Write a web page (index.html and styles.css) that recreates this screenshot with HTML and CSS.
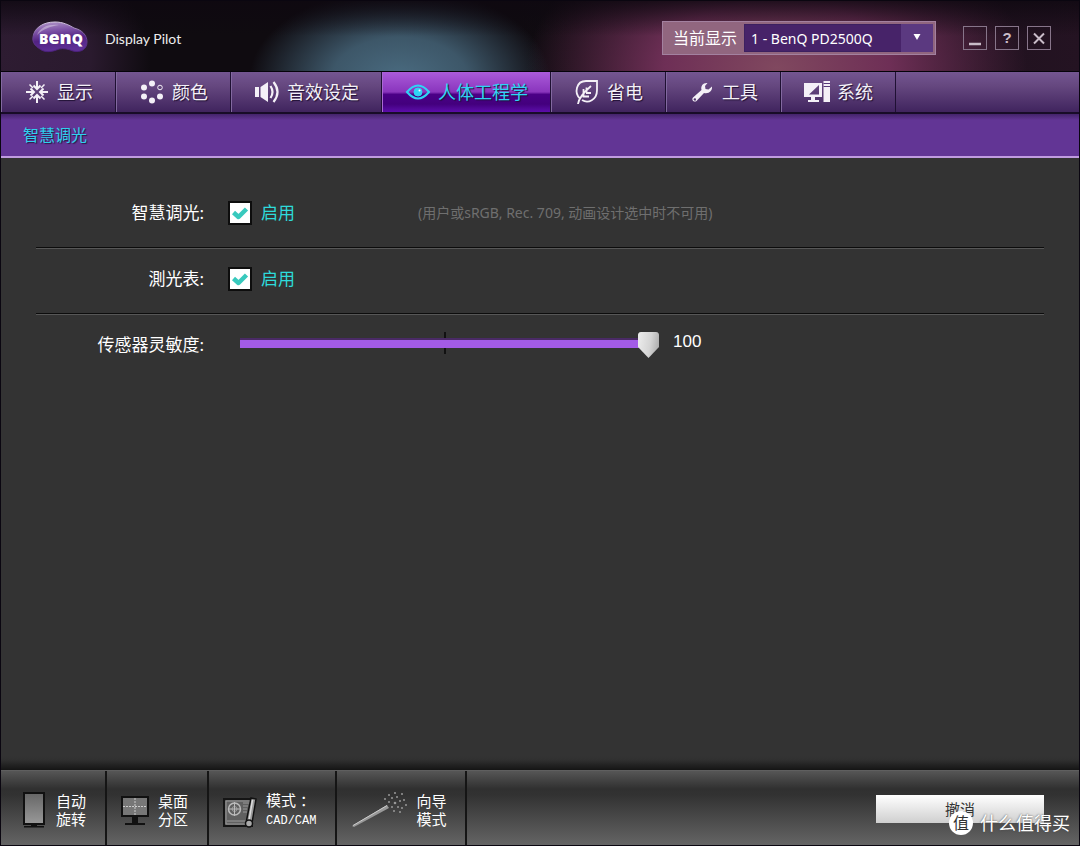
FILE: index.html
```html
<!DOCTYPE html>
<html lang="zh-CN">
<head>
<meta charset="utf-8">
<meta name="viewport" content="width=device-width, initial-scale=1">
<title>Display Pilot</title>
<link rel="stylesheet" href="styles.css">
</head>
<body>
<div class="window">
  <header class="titlebar">
    <svg class="logo" width="58" height="34" viewBox="0 0 58 34" role="img" aria-label="BenQ">
      <defs>
        <linearGradient id="logo-fill" x1="0" y1="0" x2="0.2" y2="1">
          <stop offset="0" stop-color="#b79dcc"/>
          <stop offset="0.35" stop-color="#7d52a6"/>
          <stop offset="0.65" stop-color="#522282"/>
          <stop offset="1" stop-color="#5e2f96"/>
        </linearGradient>
        <linearGradient id="logo-rim" x1="0" y1="0" x2="0" y2="1">
          <stop offset="0" stop-color="#d8cbe4"/>
          <stop offset="0.5" stop-color="#6a4592"/>
          <stop offset="1" stop-color="#4b1f7c"/>
        </linearGradient>
      </defs>
      <path d="M2 16C3 7 12 1 24 1C32 1 38 4 43 7C51 9 56 14 56 21C56 28 50 32 42 30C37 28 33 27 28 28C21 31 14 32 9 28C4 25 1 21 2 16Z" fill="url(#logo-fill)" stroke="url(#logo-rim)"/>
      <path d="M6 14C9 6 18 3 28 4C20 5 12 8 6 14Z" fill="#fff" opacity="0.35"/>
      <text class="logo-text" x="8" y="23"><tspan class="logo-cap">B</tspan>en<tspan class="logo-cap">Q</tspan></text>
    </svg>
    <h1 class="app-name">Display Pilot</h1>
    <div class="picker">
      <label class="picker-label" for="display">当前显示</label>
      <div class="picker-field">
        <select class="picker-select" id="display"><option>1 - BenQ PD2500Q</option></select>
        <svg class="picker-arrow" width="32" height="28" viewBox="0 0 32 28" aria-hidden="true"><path d="M12.500 10H19.500L16 16Z" fill="#fff"/></svg>
      </div>
    </div>
    <div class="window-buttons">
      <button class="window-button" aria-label="最小化"><svg width="22" height="22" viewBox="0 0 22 22"><path d="M5 17H17" stroke="#c9bcc8" stroke-width="2.5"/></svg></button>
      <button class="window-button" aria-label="帮助">?</button>
      <button class="window-button" aria-label="关闭"><svg width="22" height="22" viewBox="0 0 22 22"><path d="M6 6.500L16 16.500M16 6.500L6 16.500" stroke="#c9bcc8" stroke-width="2"/></svg></button>
    </div>
  </header>

  <nav class="tabs">
    <button class="tab">
      <svg width="26" height="26" viewBox="0 0 26 26" fill="none" stroke="currentColor" stroke-width="2"><path d="M13 2V10M13 16V24M2 13H10M16 13H24M9.500 6.500L13 10L16.500 6.500M9.500 19.500L13 16L16.500 19.500M6.500 9.500L10 13L6.500 16.500M19.500 9.500L16 13L19.500 16.500"/><path d="M5.500 5.500L9 9M20.500 5.500L17 9M5.500 20.500L9 17M20.500 20.500L17 17" stroke-width="1.500"/></svg>
      <span>显示</span>
    </button>
    <button class="tab">
      <svg width="26" height="26" viewBox="0 0 26 26" fill="currentColor"><circle cx="13" cy="4.500" r="3"/><circle cx="5" cy="8.500" r="3"/><circle cx="5" cy="17.500" r="3"/><circle cx="13" cy="21.500" r="3"/><circle cx="21" cy="17.500" r="3"/><circle cx="21" cy="8.500" r="2.300" fill="none" stroke="currentColor"/></svg>
      <span>颜色</span>
    </button>
    <button class="tab">
      <svg width="26" height="26" viewBox="0 0 26 26"><path d="M1 8H5V18H1ZM6.500 8L14 3V23L6.500 18Z" fill="currentColor"/><path d="M16.500 7Q20.500 13 16.500 19M19.500 3Q27.500 13 19.500 23" fill="none" stroke="currentColor" stroke-width="2.200"/></svg>
      <span>音效设定</span>
    </button>
    <button class="tab tab-active" aria-current="page">
      <svg width="26" height="26" viewBox="0 0 26 26" fill="none" stroke="currentColor"><path d="M2 13Q13 0 24 13Q13 26 2 13Z" stroke-width="2"/><circle cx="13" cy="13" r="4" fill="currentColor"/><circle cx="14.500" cy="11.500" r="1" fill="#fff" stroke="none"/></svg>
      <span>人体工程学</span>
    </button>
    <button class="tab">
      <svg width="26" height="26" viewBox="0 0 26 26" fill="none" stroke="currentColor" stroke-width="1.800"><path d="M4 25C4.500 20 9 14 17 7M9.500 16.500V10M12.500 13.500V8.500M8.500 17.500H15M12 14H17"/><path d="M6 19.500C0 14 2 2 12 2H23V11C23 21 14 25 8 21"/></svg>
      <span>省电</span>
    </button>
    <button class="tab">
      <svg width="26" height="26" viewBox="0 0 26 26" fill="currentColor"><path fill-rule="evenodd" d="M18.500 4C14 3.500 11.500 7 12.500 11L4 18.500C2 20.500 5 24 7.500 22L15 14C20 15 23.500 12 23 7.500L19.500 10.500L16.500 10L16 7ZM5.500 19.200A1.200 1.200 0 1 1 5.400 21.500A1.200 1.200 0 0 1 5.500 19.200Z"/></svg>
      <span>工具</span>
    </button>
    <button class="tab">
      <svg width="26" height="26" viewBox="0 0 26 26"><path d="M0 4H18V18H11V21H15V23H4V21H7V18H0ZM15 6L5 15.500H15Z" fill="currentColor" fill-rule="evenodd"/><path d="M19.500 2H26V23H19.500Z" fill="currentColor"/><path d="M19.500 4.500H26M19.500 7.500H26" stroke="#57387a"/></svg>
      <span>系统</span>
    </button>
  </nav>

  <div class="subtabs"><a class="subtab" href="#dimming">智慧调光</a></div>

  <main class="panel" id="dimming">
    <div class="row">
      <span class="row-label">智慧调光:</span>
      <label class="toggle"><input class="check" type="checkbox" checked><span>启用</span></label>
      <p class="hint">(用户或sRGB, Rec. 709, 动画设计选中时不可用)</p>
    </div>
    <div class="row">
      <span class="row-label">測光表:</span>
      <label class="toggle"><input class="check" type="checkbox" checked><span>启用</span></label>
    </div>
    <div class="row">
      <label class="row-label" for="sensitivity">传感器灵敏度:</label>
      <div class="slider">
        <input class="range" id="sensitivity" type="range" min="0" max="100" value="100">
      </div>
      <output class="value" for="sensitivity">100</output>
    </div>
  </main>

  <footer class="toolbar">
    <button class="tool tool-rotate">
      <svg width="22" height="38" viewBox="0 0 22 38"><defs><linearGradient id="screen" x1="0" y1="0" x2="0" y2="1"><stop offset="0" stop-color="#666"/><stop offset="1" stop-color="#999"/></linearGradient></defs><path d="M1 2H21V33H1Z" fill="url(#screen)" stroke="#111" stroke-width="2"/><path d="M8 33H14V35H8ZM1 35H21V36.500H1Z" fill="#111"/></svg>
      <span>自动<br>旋转</span>
    </button>
    <button class="tool">
      <svg width="28" height="38" viewBox="0 0 28 38"><path d="M1 6H27V25H1Z" fill="#777" stroke="#111" stroke-width="2"/><path d="M14 7V24M2 15.500H26" stroke="#ccc" stroke-dasharray="2 1"/><path d="M11 26H17V32H24V34H4V32H11Z" fill="#111"/></svg>
      <span>桌面<br>分区</span>
    </button>
    <button class="tool">
      <svg width="34" height="38" viewBox="0 0 34 38" fill="none"><path d="M1 8H29V35H1Z" fill="#606060" stroke="#151515" stroke-width="2"/><path d="M3 10H27V33H3ZM4 30H23M20 12H26M20 15H25M20 18H24M20 21H24" stroke="#999"/><circle cx="11.500" cy="18" r="6" stroke="#bbb" stroke-width="1.500"/><circle cx="11.500" cy="18" r="2.500" stroke="#999"/><path d="M11.500 11V25M5 18H18" stroke="#bbb"/><path d="M28 7L33 8L29 32H23Z" fill="#999" stroke="#111" stroke-width="1.500"/><path d="M29.500 9L26 30" stroke="#ddd" stroke-width="1.500"/><circle cx="26" cy="32.500" r="3.500" fill="#aaa" stroke="#111" stroke-width="1.500"/></svg>
      <span>模式 ：<br><span class="mode-name">CAD/CAM</span></span>
    </button>
    <button class="tool">
      <svg width="56" height="38" viewBox="0 0 56 38"><path d="M1 35L36 14L38 17L3 36Z" fill="#999"/><path d="M2 34.500L36 14.500" stroke="#ccc"/><g fill="#999"><circle cx="38" cy="4" r="1"/><circle cx="44" cy="2" r="1"/><circle cx="51" cy="3" r="1"/><circle cx="34" cy="8" r="1"/><circle cx="41" cy="7" r="1"/><circle cx="46" cy="6" r="1"/><circle cx="53" cy="9" r="1"/><circle cx="38" cy="11" r="1"/><circle cx="44" cy="12" r="1.300"/><circle cx="49" cy="10" r="1"/><circle cx="55" cy="14" r="1"/><circle cx="41" cy="16" r="1"/><circle cx="47" cy="16" r="1"/><circle cx="51" cy="17" r="1"/><circle cx="43" cy="20" r="1"/><circle cx="49" cy="21" r="1"/></g></svg>
      <span>向导<br>模式</span>
    </button>
    <button class="undo">撤消</button>
    <div class="watermark"><span class="watermark-badge">值</span><span>什么值得买</span></div>
  </footer>
</div>
</body>
</html>
```

FILE: styles.css
```css
* { box-sizing: border-box; }

body {
  margin: 0;
  background: #000;
  color: #fff;
  font-family: "Noto Sans", "Noto Sans CJK SC", sans-serif;
}

button, select, input { font: inherit; color: inherit; }

.window {
  display: flex;
  flex-direction: column;
  min-height: 100vh;
  border: 1px solid #0a0610;
  background: #333;
}

.titlebar {
  display: flex;
  align-items: center;
  height: 71px;
  padding: 0 28px 0 30px;
  border-bottom: 1px solid #05030a;
  background:
    linear-gradient(rgba(14, 8, 16, 0.8) 0%, rgba(14, 8, 16, 0) 50%),
    radial-gradient(ellipse 150px 90px at 37% 110%, #4a6b80 0%, rgba(66, 95, 114, 0.9) 45%, rgba(40, 50, 70, 0) 100%),
    radial-gradient(ellipse 250px 150px at 72% 95%, #80485f 0%, #6e2f56 45%, rgba(90, 25, 70, 0) 100%),
    radial-gradient(ellipse 150px 110px at 0% 80%, #2e1c32 0%, #2a1a2e 60%, rgba(40, 24, 44, 0) 100%),
    linear-gradient(90deg, #0f0b10 0%, #0f0b10 48%, #241322 100%);
}

.logo { flex: none; margin-top: 3px; }

.logo-text {
  fill: #fff;
  font-family: "Open Sans", sans-serif;
  font-size: 18px;
  font-weight: 800;
}

.logo-cap { font-size: 14px; }

.app-name {
  margin: 6px auto 0 16px;
  font: 14px/18px Lato, sans-serif;
  color: #eee;
}

.picker {
  display: flex;
  align-items: stretch;
  height: 34px;
  margin: 4px 27px 0 0;
  padding: 2px;
  border: 1px solid #a381a0;
  background: #91667f;
}

.picker-label {
  padding: 0 7px 0 8px;
  font-size: 16px;
  line-height: 28px;
}

.picker-field { position: relative; display: flex; }

.picker-select {
  width: 189px;
  padding: 0 32px 0 6px;
  border: 1px solid #3c2060;
  border-radius: 0;
  background: #472369;
  font-size: 14px;
  appearance: none;
}

.picker-arrow {
  position: absolute;
  top: 0;
  right: 0;
  background: #5b3980;
  pointer-events: none;
}

.window-buttons { display: flex; gap: 8px; margin-top: 3px; }

.window-button {
  display: flex;
  align-items: center;
  justify-content: center;
  width: 24px;
  height: 24px;
  padding: 0;
  border: 1px solid #87758a;
  background: transparent;
  color: #c9bcc8;
  font: bold 15px/20px "Liberation Sans", sans-serif;
}

.tabs {
  display: flex;
  height: 42px;
  border-bottom: 2px solid #180c28;
  background: linear-gradient(#745691 0%, #65477f 35%, #40245e 100%);
}

.tab {
  display: flex;
  align-items: center;
  gap: 7px;
  padding: 0 22px;
  border: 0;
  border-right: 1px solid #1f1033;
  border-left: 1px solid #8269a0;
  background: transparent;
  color: #f4f0f7;
  font-size: 18px;
  line-height: 24px;
  text-shadow: 1px 1px 1px #1f1033;
  white-space: nowrap;
}

.tab svg { flex: none; }

.tab-active {
  border-left-color: #a96bd3;
  background: linear-gradient(#aa5bda 0%, #8a35bd 50%, #4b0087 56%, #43007d 80%, #5c0daa 100%);
  color: #2fd3f5;
}

.subtabs {
  display: flex;
  align-items: center;
  height: 44px;
  padding: 0 22px;
  border-bottom: 2px solid #c09be0;
  background: linear-gradient(#44246b 0, #623595 6px);
}

.subtab {
  color: #2fd0ee;
  font-size: 16px;
  line-height: 24px;
  text-decoration: none;
  text-shadow: 1px 1px 1px #2a1745;
}

.panel {
  flex: 1;
  padding: 25px 35px 12px;
  background: linear-gradient(0deg, #151515 0, #303030 10px, #333 14px);
}

.row {
  display: flex;
  align-items: center;
  height: 66px;
  padding-bottom: 6px;
}

.row:not(:last-child) {
  border-bottom: 1px solid #575757;
  box-shadow: inset 0 -1px #0c0c0c;
}

.row-label {
  width: 168px;
  margin-right: 24px;
  font-size: 17px;
  line-height: 24px;
  text-align: right;
  white-space: nowrap;
}

.toggle {
  display: flex;
  align-items: center;
  gap: 9px;
  width: 190px;
  color: #2edbdc;
  font-size: 17px;
  line-height: 24px;
}

.check {
  width: 24px;
  height: 24px;
  margin: 0;
  border: 2px solid #0d0d0d;
  background: #fff;
  appearance: none;
}

.check:checked {
  background: #fff url("data:image/svg+xml,%3Csvg xmlns='http://www.w3.org/2000/svg' viewBox='0 0 20 20'%3E%3Cpath d='M3.500 9.500L8.500 14L16.500 6' fill='none' stroke='%2338c9bd' stroke-width='4.500' stroke-linejoin='round'/%3E%3C/svg%3E") center / 20px 20px no-repeat;
}

.hint {
  margin: 0;
  color: #6f6f6f;
  font-size: 14px;
  line-height: 20px;
}

.slider {
  position: relative;
  display: flex;
  width: 419px;
  margin-left: 12px;
}

.slider::before {
  content: "";
  position: absolute;
  top: 0;
  left: 204px;
  width: 2px;
  height: 22px;
  background: #111;
}

.range {
  position: relative;
  width: 100%;
  height: 26px;
  margin: 0;
  border-radius: 4px;
  background: linear-gradient(#4a2a66 0 2px, #a35be6 2px) 0 6px / 408px 10px no-repeat;
  appearance: none;
}

.range::-webkit-slider-thumb {
  width: 21px;
  height: 26px;
  border-radius: 3px;
  background: linear-gradient(100deg, #eee 0%, #d5d5d5 55%, #a5a5a5 100%);
  clip-path: polygon(5% 0, 95% 0, 100% 5%, 100% 58%, 50% 100%, 0 58%, 0 5%);
  appearance: none;
}

.value {
  margin: 0 0 6px 14px;
  font: 17px/20px "Liberation Sans", sans-serif;
}

.toolbar {
  position: relative;
  display: flex;
  align-items: stretch;
  height: 75px;
  border-top: 1px solid #5f5f5f;
  background: linear-gradient(#565656 0, #303030 18px, #323232 24px, #646464 100%);
}

.tool {
  display: flex;
  align-items: center;
  gap: 9px;
  padding: 4px 19px 0 14px;
  border: 0;
  border-right: 2px solid #151515;
  background: transparent;
  font-size: 15px;
  line-height: 18px;
  text-align: left;
  white-space: nowrap;
}

.tool-rotate { gap: 11px; padding-left: 22px; }

.mode-name { font: 12px/18px "Liberation Mono", monospace; }

.undo {
  width: 168px;
  height: 28px;
  margin: 24px 35px 0 auto;
  padding: 0;
  border: 0;
  background: linear-gradient(#fff, #cfcfcf);
  color: #333;
  font-size: 15px;
  line-height: 24px;
}

.watermark {
  position: absolute;
  right: 9px;
  bottom: 9px;
  display: flex;
  align-items: center;
  gap: 7px;
  font-size: 18px;
  line-height: 26px;
  text-shadow: 0 0 2px #444;
}

.watermark-badge {
  width: 24px;
  height: 24px;
  border-radius: 50%;
  background: #fff;
  color: #333;
  font-size: 16px;
  line-height: 24px;
  text-align: center;
  text-shadow: none;
}
```
